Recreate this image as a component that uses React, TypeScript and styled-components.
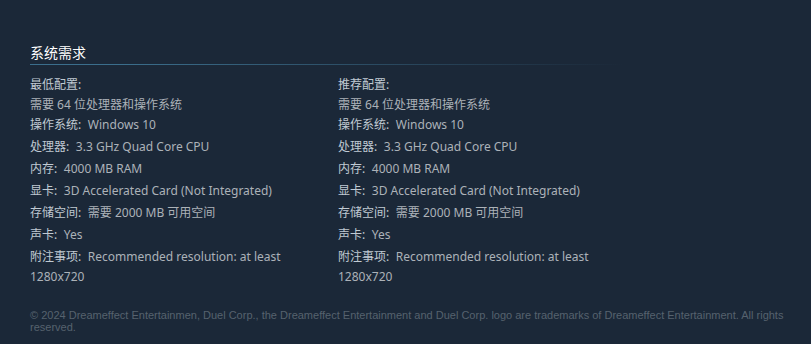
import styled, { createGlobalStyle } from "styled-components";

const GlobalStyle = createGlobalStyle`
  body {
    margin: 0;
    background: #1b2838;
  }
`;

const Page = styled.div`
  min-height: 344px;
  box-sizing: border-box;
  padding: 42px 20px 0 30px;
  background: #1b2838;
  font-family: "Noto Sans", "Noto Sans CJK SC", sans-serif;
`;

const Heading = styled.h2`
  margin: 0;
  font-size: 14px;
  line-height: 20px;
  font-weight: 400;
  color: #ffffff;
  font-family: "Noto Sans CJK SC", "Noto Sans", sans-serif;
  padding-bottom: 3px;
  background-image: linear-gradient(
    to right,
    #3b6e8c 0%,
    #3b6e8c 12%,
    rgba(59, 110, 140, 0) 78%
  );
  background-repeat: no-repeat;
  background-position: left bottom;
  background-size: 100% 1px;
`;

const Columns = styled.div`
  display: grid;
  grid-template-columns: 296px 296px;
  column-gap: 12px;
  margin-top: 10px;
`;

const Column = styled.div`
  font-size: 12px;
  line-height: 20px;
  color: #acb2b8;
`;

const ColumnTitle = styled.strong`
  display: block;
  font-weight: normal;
  color: #c0cad3;
`;

const List = styled.ul`
  list-style: none;
  margin: 0;
  padding: 0;
`;

const Item = styled.li<{ $tight?: boolean }>`
  margin-bottom: ${({ $tight }) => ($tight ? "0" : "2px")};
`;

const Label = styled.span`
  line-height: 16px;
  color: #c0cad3;
  margin-right: 3.5px;
`;

const Footer = styled.div`
  margin-top: 20px;
  font-family: "Liberation Sans", Arial, sans-serif;
  font-size: 11px;
  line-height: 12px;
  color: #56626e;
`;

interface Spec {
  label: string;
  value: string;
}

const specs: Spec[] = [
  { label: "操作系统:", value: "Windows 10" },
  { label: "处理器:", value: "3.3 GHz Quad Core CPU" },
  { label: "内存:", value: "4000 MB RAM" },
  { label: "显卡:", value: "3D Accelerated Card (Not Integrated)" },
  { label: "存储空间:", value: "需要 2000 MB 可用空间" },
  { label: "声卡:", value: "Yes" },
  { label: "附注事项:", value: "Recommended resolution: at least 1280x720" },
];

const ReqColumn = ({ title }: { title: string }) => (
  <Column>
    <ColumnTitle>{title}</ColumnTitle>
    <List>
      <Item $tight>需要 64 位处理器和操作系统</Item>
      {specs.map((s) => (
        <Item key={s.label}>
          <Label>{s.label}</Label> {s.value}
        </Item>
      ))}
    </List>
  </Column>
);

const App = () => {
  return (
    <>
      <GlobalStyle />
      <Page>
        <Heading>系统需求</Heading>
        <Columns>
          <ReqColumn title="最低配置:" />
          <ReqColumn title="推荐配置:" />
        </Columns>
        <Footer>
          © 2024 Dreameffect Entertainmen, Duel Corp., the Dreameffect
          Entertainment and Duel Corp. logo are trademarks of Dreameffect
          Entertainment. All rights reserved.
        </Footer>
      </Page>
    </>
  );
};

export default App;
